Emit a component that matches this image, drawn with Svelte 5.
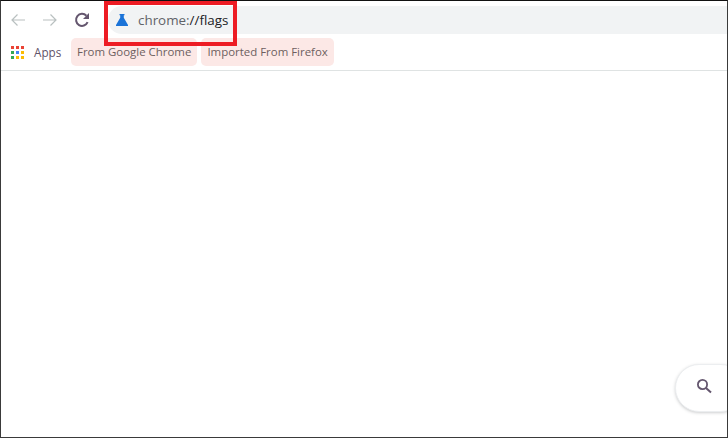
<script>
  const bookmarks = ['From Google Chrome', 'Imported From Firefox'];
  const appColors = ['#ea4335', '#ea4335', '#ea4335', '#34a853', '#4285f4', '#fbbc04', '#34a853', '#fbbc04', '#fbbc04'];
</script>

<div class="window">
  <div class="toolbar">
    <button class="nav" aria-label="Back">
      <svg width="14" height="14" viewBox="0 0 14 14"><path d="M14 7H1M6.500 1.500L1 7l5.500 5.500" fill="none" stroke="#b9c0c0" stroke-width="1.200" /></svg>
    </button>
    <button class="nav" aria-label="Forward">
      <svg width="14" height="14" viewBox="0 0 14 14"><path d="M0 7h13M7.500 1.500L13 7l-5.500 5.500" fill="none" stroke="#b9c0c0" stroke-width="1.200" /></svg>
    </button>
    <button class="nav nav--reload" aria-label="Reload">
      <svg width="16" height="16" viewBox="0 0 16 16">
        <path d="M13.600 10.200A6 6 0 1 1 12.400 3.700" fill="none" stroke="#64566e" stroke-width="2" />
        <path d="M15 1v6H9z" fill="#64566e" />
      </svg>
    </button>
    <div class="omnibox">
      <svg class="flask" width="12" height="12" viewBox="0 0 12 12"><path d="M3.500 0h5v1.200H7.800v2.600L12 11v1H0v-1l4.200-7.200V1.200H3.500z" fill="#1a73d8" /></svg>
      <span class="url">chrome:<span class="path">//flags</span></span>
    </div>
  </div>

  <div class="bookmarks">
    <div class="apps">
      <div class="apps__grid">
        {#each appColors as color}
          <i style="background: {color}"></i>
        {/each}
      </div>
      <span>Apps</span>
    </div>
    {#each bookmarks as label}
      <div class="chip">{label}</div>
    {/each}
  </div>

  <div class="page">
    <div class="search">
      <svg width="18" height="18" viewBox="0 0 18 18">
        <circle cx="7.500" cy="7.500" r="4.600" fill="none" stroke="#64566e" stroke-width="1.800" />
        <path d="M11 11l5 4.600" stroke="#64566e" stroke-width="2" />
      </svg>
    </div>
  </div>

  <div class="highlight"></div>
</div>

<style>
  :global(body) { margin: 0; background: #fff; }

  .window {
    position: relative;
    box-sizing: border-box;
    width: 728px;
    height: 438px;
    display: flex;
    flex-direction: column;
    border: 1px solid #3a3a3a;
    border-top-color: #111;
    font-family: "Open Sans", "Noto Sans", sans-serif;
    overflow: hidden;
  }

  .toolbar {
    display: flex;
    align-items: flex-start;
    box-sizing: border-box;
    height: 36px;
    padding: 5px 0 0 10px;
    flex-shrink: 0;
  }

  .nav {
    width: 32px;
    height: 28px;
    padding: 0;
    border: none;
    background: none;
    display: flex;
    align-items: center;
    justify-content: flex-start;
  }
  .nav--reload { width: 34px; margin-left: -1px; }

  .omnibox {
    flex: 1;
    height: 28px;
    display: flex;
    align-items: center;
    background: #f1f3f4;
    border-radius: 14px 0 0 14px;
  }

  .flask { margin-left: 8px; flex-shrink: 0; }

  .url {
    margin-left: 10px;
    font-size: 13.4px;
    color: #5f6368;
  }
  .path { color: #202124; }

  .bookmarks {
    display: flex;
    align-items: flex-start;
    gap: 4px;
    box-sizing: border-box;
    height: 34px;
    padding: 1px 0 0 10px;
    border-bottom: 1px solid #dfe3e3;
    flex-shrink: 0;
  }

  .apps {
    display: flex;
    align-items: center;
    gap: 10px;
    width: 56px;
    height: 28px;
    font-size: 11.7px;
    color: #5f5368;
  }

  .apps__grid {
    display: grid;
    grid-template-columns: repeat(3, 3px);
    gap: 2px;
  }
  .apps__grid i { width: 3px; height: 3px; display: block; }

  .chip {
    height: 28px;
    line-height: 27px;
    padding: 0 6px;
    border-radius: 5px;
    background: #fce8e6;
    font-size: 11.45px;
    color: #6d5f5f;
    white-space: nowrap;
  }

  .page {
    position: relative;
    flex: 1;
    background: #fff;
  }

  .search {
    position: absolute;
    right: -18px;
    bottom: 25px;
    width: 70px;
    height: 48px;
    box-sizing: border-box;
    padding: 12px 0 0 19px;
    border-radius: 24px;
    background: #fff;
    border: 1px solid #eceef0;
    box-shadow: 0 1px 3px rgba(60, 64, 67, 0.25);
  }
  .search svg { display: block; }

  .highlight {
    position: absolute;
    left: 103px;
    top: 0;
    width: 133px;
    height: 45px;
    box-sizing: border-box;
    border: 4px solid #ed1c24;
  }
</style>
